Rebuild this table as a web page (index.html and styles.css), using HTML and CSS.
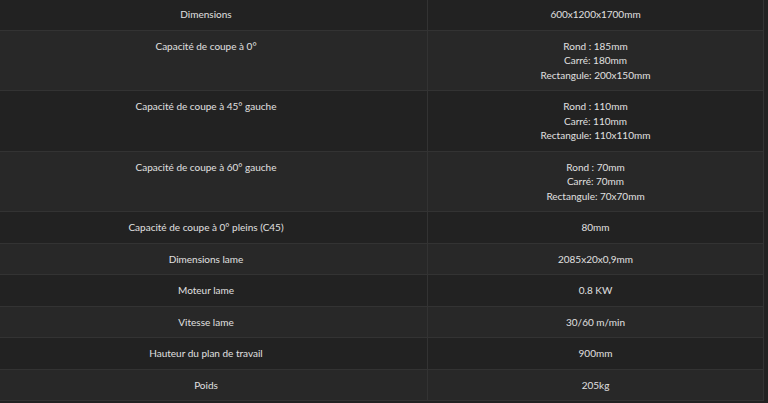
FILE: index.html
```html
<!DOCTYPE html>
<html lang="fr">
<head>
<meta charset="utf-8">
<title>Caractéristiques</title>
<link rel="stylesheet" href="styles.css">
</head>
<body>
<table class="specs">
  <tbody>
    <tr><td class="label">Dimensions</td><td class="value">600x1200x1700mm</td></tr>
    <tr><td class="label">Capacité de coupe à 0°</td><td class="value">Rond : 185mm<br>Carré: 180mm<br>Rectangule: 200x150mm</td></tr>
    <tr><td class="label">Capacité de coupe à 45° gauche</td><td class="value">Rond : 110mm<br>Carré: 110mm<br>Rectangule: 110x110mm</td></tr>
    <tr><td class="label">Capacité de coupe à 60° gauche</td><td class="value">Rond : 70mm<br>Carré: 70mm<br>Rectangule: 70x70mm</td></tr>
    <tr><td class="label">Capacité de coupe à 0° pleins (C45)</td><td class="value">80mm</td></tr>
    <tr><td class="label">Dimensions lame</td><td class="value">2085x20x0,9mm</td></tr>
    <tr><td class="label">Moteur lame</td><td class="value">0.8 KW</td></tr>
    <tr><td class="label">Vitesse lame</td><td class="value">30/60 m/min</td></tr>
    <tr><td class="label">Hauteur du plan de travail</td><td class="value">900mm</td></tr>
    <tr><td class="label">Poids</td><td class="value">205kg</td></tr>
  </tbody>
</table>
</body>
</html>
```
FILE: styles.css
```css
html, body {
  margin: 0;
  padding: 0;
  background: #222222;
  overflow: hidden;
}
body {
  font-family: Lato, "Open Sans", sans-serif;
  font-size: 10px;
  color: #e0e0e0;
}
.specs {
  border-collapse: collapse;
  margin-left: -16px;
  margin-top: -2px;
  width: 780px;
  table-layout: fixed;
}
.specs td {
  border: 1px solid #333333;
  padding: 8px 6px;
  line-height: 14.5px;
  text-align: center;
  vertical-align: top;
}
.specs .label {
  width: 430px;
}
.specs tr:nth-child(odd) {
  background: #222222;
}
.specs tr:nth-child(even) {
  background: #282828;
}
```
